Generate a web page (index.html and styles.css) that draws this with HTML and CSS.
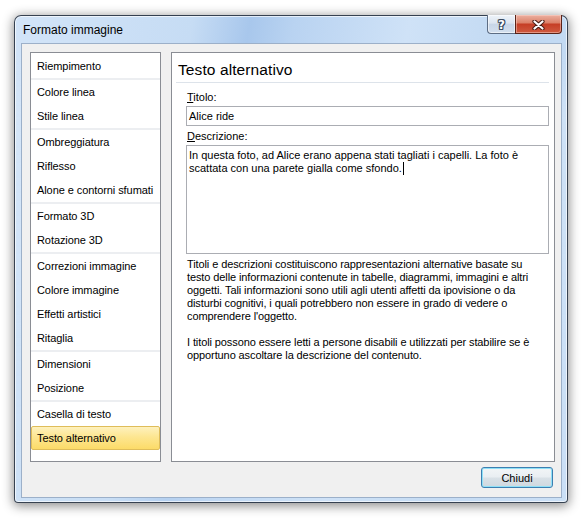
FILE: index.html
```html
<!DOCTYPE html>
<html lang="it">
<head>
<meta charset="utf-8">
<title>Formato immagine</title>
<link rel="stylesheet" href="styles.css">
</head>
<body>
<div class="window">
  <div class="titlebar">
    <span class="caption">Formato immagine</span>
    <div class="caption-buttons">
      <div class="cbtn help"><span class="q">?</span></div>
      <div class="cbtn close">
        <svg width="13" height="10" viewBox="0 0 13 10">
          <path d="M2.5 1.5 L10.5 8.5 M10.5 1.5 L2.5 8.5" stroke="#4a1d14" stroke-width="4.2" stroke-linecap="round" fill="none"/>
          <path d="M2.5 1.5 L10.5 8.5 M10.5 1.5 L2.5 8.5" stroke="#ffffff" stroke-width="2.2" stroke-linecap="round" fill="none"/>
        </svg>
      </div>
    </div>
  </div>
  <div class="client">
    <div class="main">
      <ul class="nav">
        <li class="item">Riempimento</li>
        <li class="sep"></li>
        <li class="item">Colore linea</li>
        <li class="item">Stile linea</li>
        <li class="sep"></li>
        <li class="item">Ombreggiatura</li>
        <li class="item">Riflesso</li>
        <li class="item">Alone e contorni sfumati</li>
        <li class="sep"></li>
        <li class="item">Formato 3D</li>
        <li class="item">Rotazione 3D</li>
        <li class="sep"></li>
        <li class="item">Correzioni immagine</li>
        <li class="item">Colore immagine</li>
        <li class="item">Effetti artistici</li>
        <li class="item">Ritaglia</li>
        <li class="sep"></li>
        <li class="item">Dimensioni</li>
        <li class="item">Posizione</li>
        <li class="sep"></li>
        <li class="item">Casella di testo</li>
        <li class="item selected">Testo alternativo</li>
      </ul>
      <section class="pane">
        <h1 class="pane-title">Testo alternativo</h1>
        <div class="form">
          <div class="label"><u>T</u>itolo:</div>
          <div class="input">Alice ride</div>
          <div class="label label-desc"><u>D</u>escrizione:</div>
          <div class="textarea">In questa foto, ad Alice erano appena stati tagliati i capelli. La foto è<br>scattata con una parete gialla come sfondo.<span class="caret"></span></div>
          <p class="note">Titoli e descrizioni costituiscono rappresentazioni alternative basate su<br>testo delle informazioni contenute in tabelle, diagrammi, immagini e altri<br>oggetti. Tali informazioni sono utili agli utenti affetti da ipovisione o da<br>disturbi cognitivi, i quali potrebbero non essere in grado di vedere o<br>comprendere l'oggetto.</p>
          <p class="note note-2">I titoli possono essere letti a persone disabili e utilizzati per stabilire se è<br>opportuno ascoltare la descrizione del contenuto.</p>
        </div>
      </section>
    </div>
    <div class="footer">
      <button class="btn" type="button">Chiudi</button>
    </div>
  </div>
</div>
</body>
</html>
```

FILE: styles.css
```css
* { box-sizing: border-box; }

html, body {
  margin: 0;
  padding: 0;
}

body {
  width: 584px;
  height: 519px;
  overflow: hidden;
  background: #ffffff;
  font-family: "Liberation Sans", Arial, sans-serif;
  font-size: 11px;
  color: #000;
}

.window {
  width: 554px;
  height: 488px;
  margin: 15px 0 0 14px;
  border: 1px solid rgba(28, 38, 52, 0.85);
  border-radius: 7px 7px 4px 4px;
  padding: 0 5px 4px 6px;
  display: flex;
  flex-direction: column;
  background:
    linear-gradient(180deg, rgba(255,255,255,0) 0%, rgba(255,255,255,0) 8%, rgba(215,231,248,0.55) 20%, rgba(205,225,246,0.35) 100%),
    linear-gradient(100deg, #d2e4f8 0%, #c6dcf4 28%, #a8c7ec 37%, #b9d3f1 44%, #cfe2f7 62%, #c0d8f2 80%, #c9def5 100%);
  box-shadow: 0 2px 11px 1px rgba(0, 0, 0, 0.45), inset 0 0 0 1px rgba(255, 255, 255, 0.65);
}

.titlebar {
  height: 27px;
  display: flex;
  align-items: center;
  padding-left: 2px;
}

.caption {
  flex: 1;
  font-size: 12px;
  color: #000;
  padding-top: 1px;
}

.caption-buttons {
  align-self: flex-start;
  margin-top: -1px;
  display: flex;
  height: 19px;
}

.cbtn {
  height: 19px;
  display: flex;
  align-items: center;
  justify-content: center;
  border: 1px solid;
  border-top: none;
}

.help {
  width: 28px;
  border-color: #5d6d84;
  border-right: none;
  border-radius: 0 0 0 4px;
  background: linear-gradient(180deg, #eef3f9 0%, #dce5f0 45%, #c8d6e7 52%, #d3dfee 100%);
  box-shadow: inset 0 0 0 1px rgba(255,255,255,0.55);
}

.q {
  font-family: "DejaVu Sans", sans-serif;
  font-weight: bold;
  font-size: 12px;
  color: #fff;
  line-height: 1;
  margin-top: 1px;
  text-shadow: 1px 0 #3c4b60, -1px 0 #3c4b60, 0 1px #3c4b60, 0 -1px #3c4b60, 1px 1px #3c4b60, -1px -1px #3c4b60, 1px -1px #3c4b60, -1px 1px #3c4b60;
}

.close {
  width: 47px;
  border-color: #5a2318;
  border-radius: 0 0 4px 0;
  background: linear-gradient(180deg, #ecb0a1 0%, #dc836b 42%, #c63f26 52%, #cf5b41 100%);
  box-shadow: inset 0 0 0 1px rgba(255,220,210,0.45);
}

.close svg {
  display: block;
  margin-top: 1px;
}

.client {
  flex: 1;
  border: 1px solid #9cb0c9;
  background: #f0f0f0;
  padding: 8px 6px 9px 8px;
  display: flex;
  flex-direction: column;
}

.main {
  display: flex;
  gap: 10px;
  height: 410px;
}

.nav {
  width: 131px;
  margin: 0;
  padding: 1px 0 0;
  list-style: none;
  border: 1px solid #8a8d94;
  background: #fff;
}

.item {
  height: 24px;
  line-height: 24px;
  padding-left: 6px;
  white-space: nowrap;
  color: #000;
  letter-spacing: -0.08px;
}

.sep {
  height: 2px;
  background: #eceef1;
}

.item.selected {
  border: 1px solid #dfbd5a;
  border-radius: 2px;
  padding-left: 5px;
  line-height: 22px;
  background: linear-gradient(180deg, #fef1bd 0%, #fde691 45%, #fcdb68 100%);
}

.pane {
  flex: 1;
  border: 1px solid #8a8d94;
  background: #fff;
}

.pane-title {
  margin: 7px 5px 0 4px;
  padding: 0 0 2px 2px;
  height: 23px;
  font-size: 15.5px;
  line-height: 20px;
  font-weight: normal;
  border-bottom: 1px solid #dde3ea;
  white-space: nowrap;
  letter-spacing: 0.1px;
}

.form {
  padding: 0 5px 0 14px;
}

.label {
  margin-top: 8px;
  padding-left: 1px;
  line-height: 13px;
  height: 13px;
}

.label-desc {
  margin-top: 4px;
}

.input {
  margin-top: 2px;
  height: 20px;
  border: 1px solid #abadb3;
  padding: 0 2px;
  line-height: 18px;
}

.textarea {
  margin-top: 2px;
  height: 109px;
  border: 1px solid #abadb3;
  padding: 3px 2px;
  line-height: 13px;
  white-space: nowrap;
}

.caret {
  display: inline-block;
  width: 1px;
  height: 13px;
  background: #000;
  vertical-align: -3px;
  margin-left: 1px;
}

.note {
  margin: 4px 0 0;
  padding-left: 1px;
  line-height: 13px;
  white-space: nowrap;
  letter-spacing: -0.1px;
}

.note-2 {
  margin-top: 13px;
}

.footer {
  margin-top: 5px;
  display: flex;
  justify-content: flex-end;
  padding-right: 2px;
}

.btn {
  width: 72px;
  height: 21px;
  padding: 0;
  font-family: "Liberation Sans", Arial, sans-serif;
  font-size: 11px;
  color: #000;
  border: 1px solid #3c7fb1;
  border-radius: 3px;
  background: linear-gradient(180deg, #f2f5f7 0%, #e9eef2 48%, #d9e1e7 52%, #cfd8df 100%);
  box-shadow: inset 0 0 0 1px #8fe0f7;
}
```
